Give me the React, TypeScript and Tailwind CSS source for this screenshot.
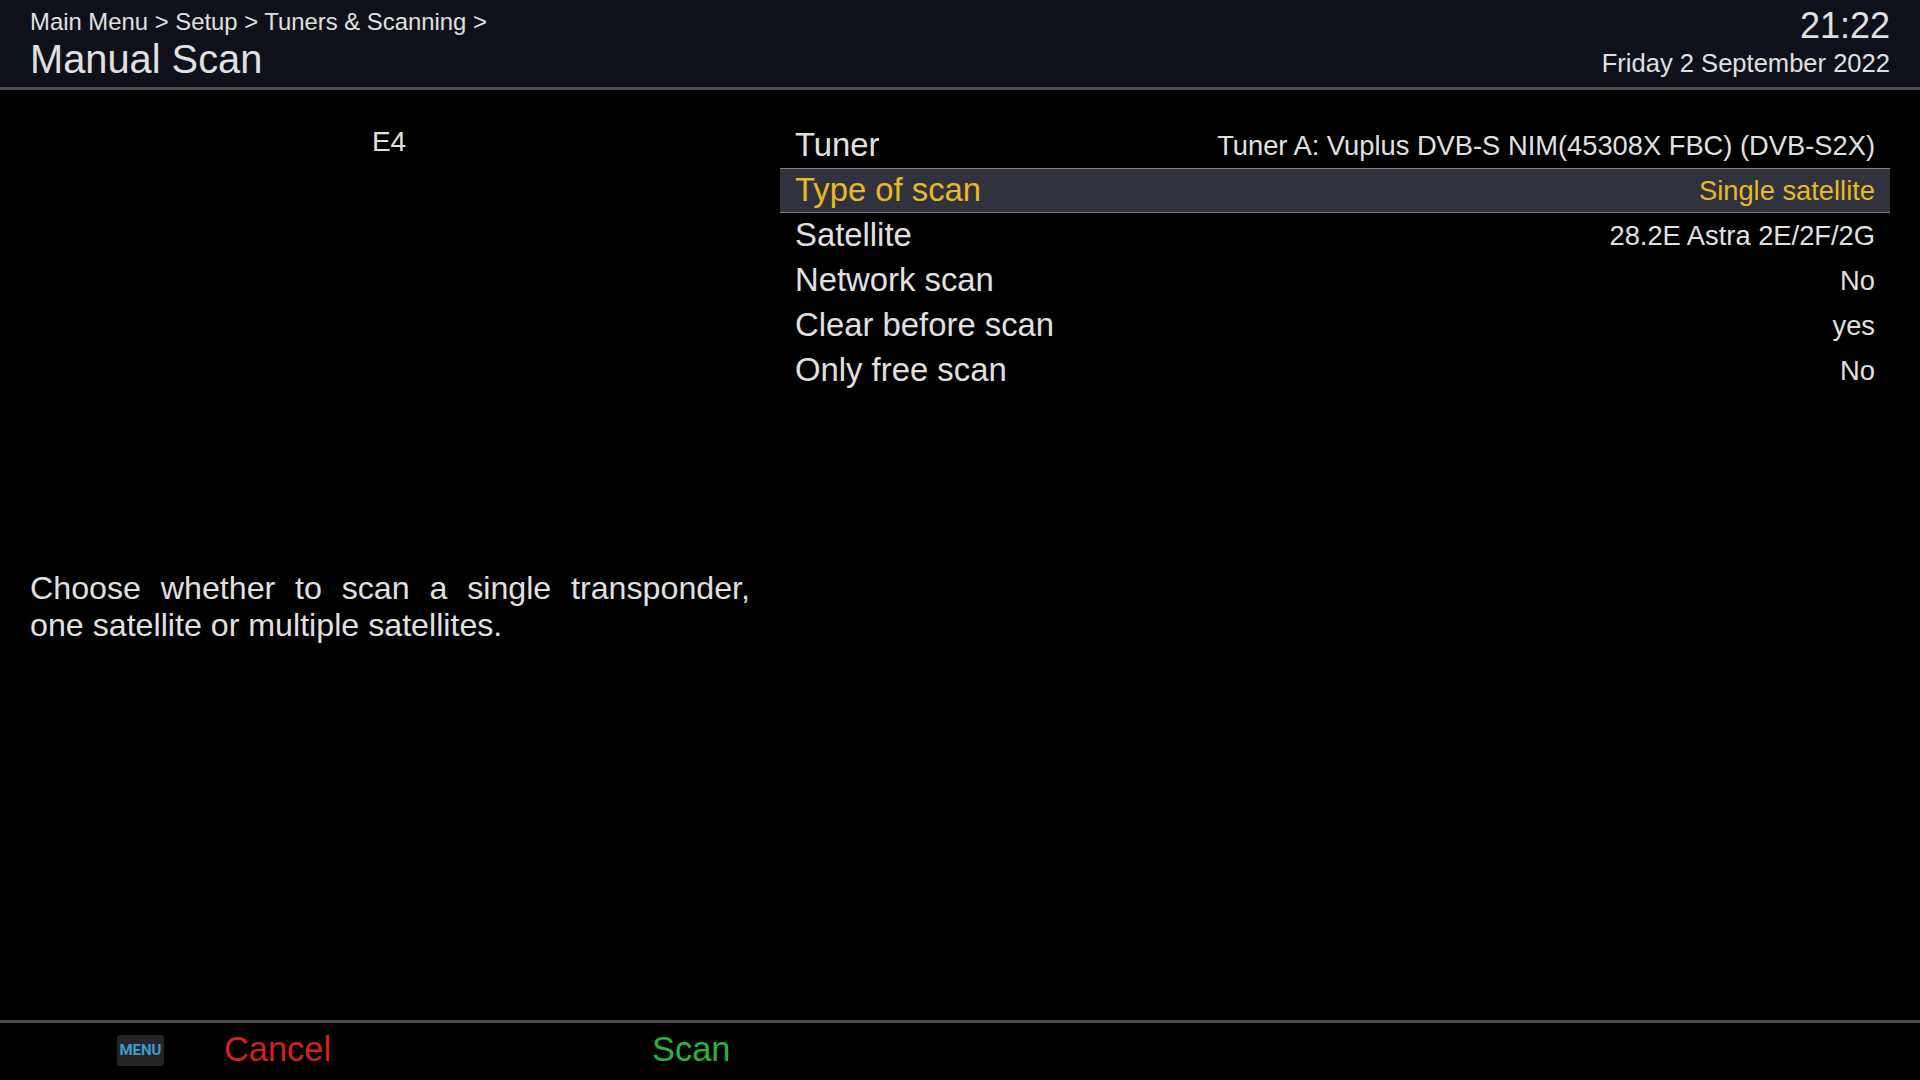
export default function App() {
  const rows: [string, string][] = [
    ["Tuner", "Tuner A: Vuplus DVB-S NIM(45308X FBC) (DVB-S2X)"],
    ["Type of scan", "Single satellite"],
    ["Satellite", "28.2E Astra 2E/2F/2G"],
    ["Network scan", "No"],
    ["Clear before scan", "yes"],
    ["Only free scan", "No"],
  ];
  return (
    <div className="flex h-[1080px] w-[1920px] flex-col overflow-hidden bg-black font-['Liberation_Sans',sans-serif] text-[#e0e0e0]">
      <header className="flex h-[90px] shrink-0 justify-between border-b-[3px] border-[#4c4c50] bg-[#0e1119] px-[30px]">
        <div>
          <div className="pt-[7px] text-[23.87px] leading-[30px]">Main Menu &gt; Setup &gt; Tuners &amp; Scanning &gt;</div>
          <div className="text-[39.8px] leading-[45px]">Manual Scan</div>
        </div>
        <div className="text-right">
          <div className="pt-[5px] text-[36px] leading-[42px]">21:22</div>
          <div className="text-[25.56px] leading-[32px]">Friday 2 September 2022</div>
        </div>
      </header>
      <main className="flex flex-1">
        <section className="w-[780px] shrink-0 px-[30px]">
          <div className="pr-[2px] pt-[35px] text-center text-[28px] leading-[34px]">E4</div>
          <div className="mt-[411px] text-[32.2px] leading-[37px]">
            <p className="text-justify [text-align-last:justify]">Choose whether to scan a single transponder,</p>
            <p>one satellite or multiple satellites.</p>
          </div>
        </section>
        <section className="flex-1 pr-[30px] pt-[33px]">
          {rows.map(([label, value], i) => (
            <div
              key={label}
              className={
                i === 1
                  ? "flex h-[45px] items-center justify-between border-y border-[#808086] bg-[#30323e] px-[15px] text-[#e8b923]"
                  : "flex h-[45px] items-center justify-between px-[15px]"
              }
            >
              <span className="-translate-y-px text-[32.85px]">{label}</span>
              <span className="translate-y-px text-[27.3px]">{value}</span>
            </div>
          ))}
        </section>
      </main>
      <footer className="flex h-[60px] shrink-0 items-center border-t-[3px] border-[#4c4c50] pb-[3px] pl-[117px]">
        <div className="flex h-[31px] w-[47px] items-center justify-center rounded-[3px] bg-[#232527] font-['Roboto',sans-serif] text-[15px] font-bold text-[#3f9bd0]">
          MENU
        </div>
        <span className="ml-[60px] w-[428px] text-[34.4px] text-[#d42020]">Cancel</span>
        <span className="text-[34.4px] text-[#22b83a]">Scan</span>
      </footer>
    </div>
  );
}
